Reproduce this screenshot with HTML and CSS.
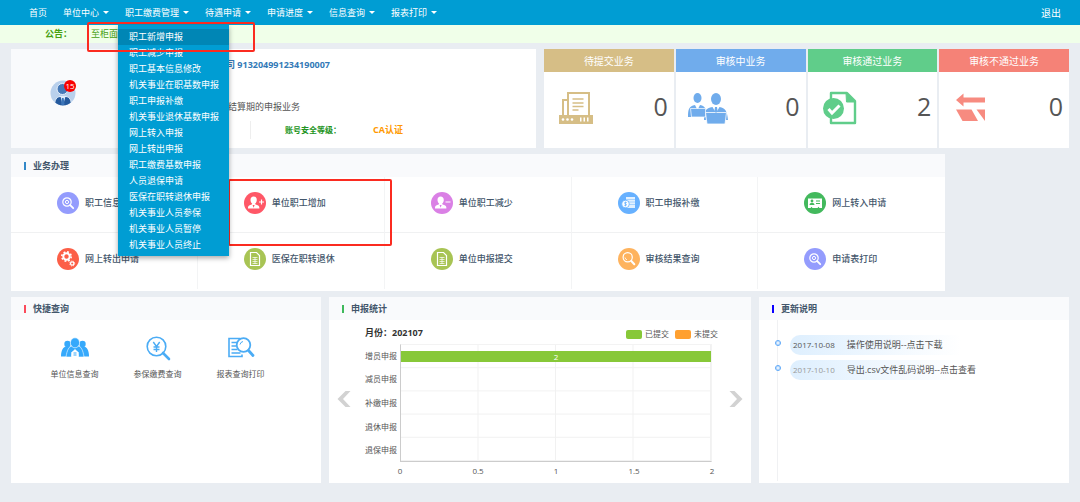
FILE: index.html
```html
<!DOCTYPE html>
<html lang="zh-CN">
<head>
<meta charset="utf-8">
<title>单位网上申报</title>
<link rel="stylesheet" href="styles.css">
</head>
<body>
<svg class="defs" aria-hidden="true">
  <symbol id="i-zoom" viewBox="0 0 22 22"><g fill="none" stroke="#fff"><circle cx="10" cy="10" r="4.2" stroke-width="1.2"/><circle cx="10" cy="10" r="1.6" stroke-width="1"/><path d="M13.2 13.2l3 3" stroke-width="1.8" stroke-linecap="round"/></g></symbol>
  <symbol id="i-user" viewBox="0 0 22 22"><path fill="#fff" d="M9.6 4.6c2 0 3.2 1.400 3.200 3.400 0 1.500-.7 2.900-1.600 3.500v.8l3 1.200c.8.400 1.200 1.200 1.200 2.900H4c0-1.700.3-2.500 1.100-2.900l3-1.200v-.8c-.9-.6-1.600-2-1.600-3.500 0-2 1.100-3.400 3.100-3.400z"/><path d="M8.600 13l1 2.800 1-2.800z" fill="currentColor"/></symbol>
  <symbol id="i-doc" viewBox="0 0 22 22"><g fill="none" stroke="#fff"><path d="M6.500 4.500h6l3 3v10h-9z" stroke-width="1.200"/><path d="M8.500 9.500h5M8.500 11.500h5M8.500 13.500h5M8.500 15.500h5M11 9v7" stroke-width=".7"/></g></symbol>
</svg>

<header class="topbar">
  <nav class="nav">
    <a class="nav-link" href="#">首页</a>
    <a class="nav-link drop" href="#">单位中心</a>
    <div class="nav-item">
      <a class="nav-link drop" href="#">职工缴费管理</a>
      <ul class="menu">
        <li><a class="active" href="#">职工新增申报</a></li>
        <li><a href="#">职工减少申报</a></li>
        <li><a href="#">职工基本信息修改</a></li>
        <li><a href="#">机关事业在职基数申报</a></li>
        <li><a href="#">职工申报补缴</a></li>
        <li><a href="#">机关事业退休基数申报</a></li>
        <li><a href="#">网上转入申报</a></li>
        <li><a href="#">网上转出申报</a></li>
        <li><a href="#">职工缴费基数申报</a></li>
        <li><a href="#">人员退保申请</a></li>
        <li><a href="#">医保在职转退休申报</a></li>
        <li><a href="#">机关事业人员参保</a></li>
        <li><a href="#">机关事业人员暂停</a></li>
        <li><a href="#">机关事业人员终止</a></li>
      </ul>
      <span class="mark mark-menu"></span>
    </div>
    <a class="nav-link drop" href="#">待遇申请</a>
    <a class="nav-link drop" href="#">申请进度</a>
    <a class="nav-link drop" href="#">信息查询</a>
    <a class="nav-link drop" href="#">报表打印</a>
  </nav>
  <a class="logout" href="#">退出</a>
</header>

<div class="notice"><strong>公告：</strong><span>至柜面</span></div>

<main class="page">
  <div class="overview">
    <section class="account">
      <div class="account-side">
        <div class="avatar">
          <svg viewBox="0 0 26 26"><defs><clipPath id="av"><circle cx="13" cy="13" r="12.500"/></clipPath></defs><circle cx="13" cy="13" r="12.500" fill="#b9d0ec"/><g clip-path="url(#av)"><circle cx="12.500" cy="9" r="5.500" fill="#4679b8" stroke="#e4eefa"/><path d="M4.500 26c0-6 2-9 5.500-9.500h6c3.500.5 5.500 3.500 5.500 9.500z" fill="#24599d" stroke="#e4eefa"/><path d="M10.500 16.500l2.300 9.500 2.700-9.500z" fill="#dceafa"/><path d="M12 18h1.600l1 6-1.800 2-1.800-2z" fill="#3b74b8"/></g></svg>
          <span class="badge">15</span>
        </div>
      </div>
      <div class="account-info">
        <h1>公司 913204991234190007</h1>
        <p class="account-tip">结算期的申报业务</p>
        <div class="level"><span class="level-name">账号安全等级：</span><strong>CA认证</strong></div>
      </div>
    </section>
    <div class="stats">
      <section class="stat sand"><h2>待提交业务</h2><div class="stat-body">
        <svg viewBox="0 0 36 34"><g fill="none" stroke="currentColor" stroke-width="2"><path d="M10 24V2h21v22"/><path d="M10 9H5v15"/><path d="M14.500 8h11M14.500 12h11M14.500 15.500h11M14.500 19h6" stroke-width="1.500"/></g><path d="M1 24h34v9H1z" fill="currentColor"/><g fill="#fff"><circle cx="5" cy="28.500" r="1.300"/><circle cx="9.500" cy="28.500" r="1.300"/><circle cx="14" cy="28.500" r="1.300"/><path d="M22 26.500h1.500v4H22zM25.500 26.500H27v4h-1.500zM29 26.500h1.500v4H29z"/></g></svg>
        <span>0</span></div></section>
      <section class="stat blue"><h2>审核中业务</h2><div class="stat-body">
        <svg class="wide" viewBox="0 0 40 34"><g fill="currentColor"><ellipse cx="9.500" cy="7" rx="4" ry="5"/><path d="M0 26c0-8 1-11 7-12l2.500 5 2.500-5c3 .5 5 2 6 5l-2 7z"/><ellipse cx="28" cy="8" rx="5" ry="6"/><path d="M16 29c0-9 1.500-12 8.500-13l3.500 6 3.500-6c6 1 7.500 4 8.500 13z"/></g><path d="M2.500 17.500h15v8.500h-14z" fill="currentColor" stroke="#fff" stroke-width=".7"/><path d="M17.500 21.500h21l-1.500 11.500H19z" fill="currentColor" stroke="#fff" stroke-width=".8"/><path d="M27 16h2l.6 4-1.600 2-1.600-2z" fill="currentColor"/></svg>
        <span>0</span></div></section>
      <section class="stat green"><h2>审核通过业务</h2><div class="stat-body">
        <svg viewBox="0 0 36 34"><path d="M9 8V2h16l8 8v22H9v-5" fill="none" stroke="currentColor" stroke-width="2.400" stroke-linejoin="round"/><path d="M24 2l9 9h-8.500z" fill="currentColor" stroke="currentColor"/><circle cx="11.500" cy="17.500" r="10.500" fill="currentColor"/><path d="M6.500 18l3.500 4 7.500-7.500" fill="none" stroke="#fff" stroke-width="3"/></svg>
        <span>2</span></div></section>
      <section class="stat red"><h2>审核不通过业务</h2><div class="stat-body">
        <svg viewBox="0 0 36 34"><g fill="currentColor"><path d="M3 9L10.500 2.500v4H32v5H10.500v4z"/><path d="M3 18.500h15.500L25 30H9.500z"/><path d="M23.500 18.500H32V30z"/></g></svg>
        <span>0</span></div></section>
    </div>
  </div>

  <section class="panel services">
    <h2 class="panel-title t-blue">业务办理</h2>
    <div class="service-grid">
      <a class="service" href="#"><svg class="c1"><use href="#i-zoom"/></svg>职工信息修改</a>
      <a class="service" href="#"><svg class="c2" viewBox="0 0 22 22"><use href="#i-user"/><path d="M15 10h5M17.500 7.500v5" stroke="#fff" stroke-width="1.200"/></svg>单位职工增加<span class="mark mark-service"></span></a>
      <a class="service" href="#"><svg class="c3" viewBox="0 0 22 22"><use href="#i-user"/><path d="M14.500 10h5" stroke="#fff" stroke-width="1.200"/></svg>单位职工减少</a>
      <a class="service" href="#"><svg class="c4" viewBox="0 0 22 22"><path d="M8 5h9v11H8z" fill="#e3f1ff"/><path d="M8 7.500h9M8 10h9M8 12.500h9" stroke="#8cc5ff" stroke-width=".7"/><circle cx="7.500" cy="12" r="3.800" fill="#fff" stroke="#67b1ff" stroke-width=".8"/><path d="M8.800 10.700c-2.500-1.200-3 .8-1.300 1.200s1.200 2.400-1.300 1.300M7.500 9.700v4.600" stroke="#67b1ff" stroke-width=".8" fill="none"/></svg>职工申报补缴</a>
      <a class="service" href="#"><svg class="c5" viewBox="0 0 22 22"><path d="M4 6.500h14v9.500h-2.500l-1-1.300-1 1.300h-5l-1-1.300-1 1.300H4z" fill="#fff"/><circle cx="8" cy="9" r="1.400" fill="#43b95d"/><path d="M5.500 13c0-3 5-3 5 0zM12 8.500h4v1h-4zM12 11h4v1h-4z" fill="#43b95d"/></svg>网上转入申请</a>
      <a class="service" href="#"><svg class="c6" viewBox="0 0 22 22"><g fill="none" stroke="#fff"><circle cx="9.500" cy="8.500" r="3.200" stroke-width="2"/><circle cx="9.500" cy="8.500" r="4.700" stroke-width="1.600" stroke-dasharray="1.850 1.850"/><circle cx="15.200" cy="15.500" r="1.700" stroke-width="1.300"/><circle cx="15.200" cy="15.500" r="2.500" stroke-width=".9" stroke-dasharray="1 1"/></g></svg>网上转出申请</a>
      <a class="service" href="#"><svg class="c7"><use href="#i-doc"/></svg>医保在职转退休</a>
      <a class="service" href="#"><svg class="c7"><use href="#i-doc"/></svg>单位申报提交</a>
      <a class="service" href="#"><svg class="c8" viewBox="0 0 22 22"><g fill="none" stroke="#fff"><circle cx="9.700" cy="9.300" r="4.600" stroke-width="1.200"/><path d="M7 9.500a2.800 2.800 0 0 0 2 2.300" stroke-width=".8"/><path d="M13.300 13l3 3.200" stroke-width="2" stroke-linecap="round"/></g></svg>审核结果查询</a>
      <a class="service" href="#"><svg class="c1"><use href="#i-zoom"/></svg>申请表打印</a>
    </div>
  </section>

  <div class="bottom">
    <section class="panel">
      <h2 class="panel-title t-red">快捷查询</h2>
      <div class="quick">
        <a href="#"><svg viewBox="0 0 28 26" fill="#36a9fb"><circle cx="6.500" cy="8.500" r="3.200"/><path d="M0 21c0-6 2-9.500 5-10h5L6 21z"/><circle cx="21.500" cy="8.500" r="3.200"/><path d="M28 21c0-6-2-9.500-5-10h-5l4 10z"/><path d="M5 21.500c1-7 3-10.500 6-11h6c3 .5 5 4 6 11h-5.500l-.5-5h-6l-.5 5z" stroke="#fff" stroke-width=".6"/><ellipse cx="14" cy="7.300" rx="4.600" ry="5" stroke="#fff" stroke-width=".6"/><path d="M10.500 17l3.500-3.500 3.500 3.500v4h-7z" fill="#fff"/><path d="M12.500 17h3v.9h-3zM12.500 19h3v.9h-3z"/></svg>单位信息查询</a>
        <a href="#"><svg viewBox="0 0 28 26" fill="none" stroke="#4bacf5"><circle cx="12.500" cy="11" r="9.300" stroke-width="1.600"/><path d="M9.300 6.500l3.200 4.500 3.200-4.500M12.500 11v5.500M9.500 11.500h6M9.500 14h6" stroke-width="1.400"/><path d="M19 17.500l6 6" stroke-width="2.600" stroke-linecap="round"/></svg>参保缴费查询</a>
        <a href="#"><svg viewBox="0 0 28 26" fill="none" stroke="#4bacf5"><path d="M13 3H2v18h13v-2" stroke-width="1.600"/><path d="M4.500 7H10M4.500 10.500H9M4.500 14h6M4.500 17.500h9" stroke-width="1.400"/><circle cx="16.500" cy="9.500" r="6.800" stroke-width="1.800"/><path d="M13 9a3.800 3.800 0 0 1 3-3" stroke-width="1"/><path d="M21.500 15l4.500 5" stroke-width="2.800" stroke-linecap="round"/></svg>报表查询打印</a>
      </div>
    </section>

    <section class="panel">
      <h2 class="panel-title t-green">申报统计</h2>
      <div class="stats-body">
        <button class="arrow" aria-label="上一月"><svg viewBox="0 0 14 18"><path d="M9 1h5L6.500 9l7.500 8H9L1 9z" fill="#d2d2d2"/></svg></button>
        <div class="chart">
          <div class="chart-head"><strong>月份：202107</strong><span class="legend"><i class="done"></i>已提交<i class="todo"></i>未提交</span></div>
          <div class="chart-main">
            <div class="y-labels"><span>增员申报</span><span>减员申报</span><span>补缴申报</span><span>退休申报</span><span>退保申报</span></div>
            <div class="plot"><div class="bar" style="width:100%">2</div></div>
          </div>
          <div class="x-labels"><span>0</span><span>0.5</span><span>1</span><span>1.5</span><span>2</span></div>
        </div>
        <button class="arrow" aria-label="下一月"><svg viewBox="0 0 14 18"><path d="M5 1H0l7.500 8L0 17h5l8-8z" fill="#d2d2d2"/></svg></button>
      </div>
    </section>

    <section class="panel">
      <h2 class="panel-title t-navy">更新说明</h2>
      <ul class="timeline">
        <li><a href="#"><time>2017-10-08</time>操作使用说明--点击下载</a></li>
        <li><a class="old" href="#"><time>2017-10-10</time>导出.csv文件乱码说明--点击查看</a></li>
      </ul>
    </section>
  </div>
</main>
</body>
</html>
```
FILE: styles.css
```css
*, *::before, *::after { box-sizing: border-box; }
body {
  margin: 0;
  background: #e9edf2;
  color: #555;
  font: 9px/16px "Open Sans", "Noto Sans CJK SC", sans-serif;
}
h1, h2, p, ul { margin: 0; padding: 0; font-size: inherit; }
ul { list-style: none; }
a { color: inherit; text-decoration: none; }
svg { display: block; flex: none; }
.defs { position: absolute; width: 0; height: 0; }

.topbar {
  display: flex;
  justify-content: space-between;
  align-items: center;
  height: 25px;
  padding: 0 19px 0 29px;
  background: #009dd3;
  color: #fff;
}
.nav { display: flex; gap: 16px; }
.nav-item { position: relative; z-index: 5; }
.nav-link { display: flex; align-items: center; gap: 4px; }
.drop::after {
  content: "";
  border: 3px solid transparent;
  border-top-color: #fff;
  border-bottom: 0;
}
.logout { font-size: 10px; }
.menu {
  position: absolute;
  top: 20px;
  left: -7px;
  width: 111px;
  padding: 4px 0 3px;
  background: #009dd3;
  box-shadow: 0 2px 5px rgba(0, 0, 0, .35);
}
.menu a { display: block; padding-left: 11px; white-space: nowrap; }
.menu .active { background: #0086b5; }
.mark {
  position: absolute;
  border: 2px solid #fb2b20;
  border-radius: 2px;
  pointer-events: none;
}
.mark-menu { top: 17px; left: -38px; width: 168px; height: 30px; }
.mark-service { top: 2px; left: 30px; right: -8px; bottom: -14px; z-index: 2; }

.notice {
  display: flex;
  align-items: center;
  gap: 19px;
  height: 18px;
  padding-left: 45px;
  background: #f0ffe9;
  color: #46a010;
}

.page { display: grid; gap: 6px; padding: 6px 11px 20px; }
.overview { display: grid; grid-template-columns: 1fr 1fr; gap: 8px; min-height: 99px; }
.account { display: flex; background: #fff; }
.account-side { flex: 0 0 28%; padding: 31px 0 0 39px; background: #f9fafc; }
.avatar { position: relative; width: 26px; height: 26px; }
.badge {
  position: absolute;
  top: 0;
  left: 14px;
  width: 12px;
  height: 12px;
  border-radius: 50%;
  background: #f90000;
  color: #fff;
  font-size: 8px;
  line-height: 12px;
  text-align: center;
}
.account-info { flex: 1; padding: 8px 0 0 59px; }
.account h1 { color: #337ab7; }
.account-tip { padding: 26px 0 0 11px; }
.level { display: flex; align-items: center; margin: 6px 0 0 33px; height: 18px; border-left: 1px solid #eee; color: #f90; }
.level-name { padding: 0 32px 0 34px; color: #219321; font-size: 8px; font-weight: bold; }

.stats { display: grid; grid-template-columns: repeat(4, 1fr); gap: 2px; }
.stat { background: #fff; }
.stat h2 { color: #fff; font-size: 10px; font-weight: normal; line-height: 24px; height: 23px; text-align: center; }
.stat-body { display: flex; justify-content: space-between; padding: 19px 6px 0 14px; }
.stat-body svg { width: 36px; height: 34px; }
.stat.blue .stat-body { padding-left: 12px; }
.stat-body .wide { width: 40px; }
.stat-body span { color: #555; font-size: 25px; line-height: 31px; }
.sand { color: #d6be86; } .sand h2 { background: #d6be86; }
.blue { color: #70acec; } .blue h2 { background: #70acec; }
.green { color: #60cd8a; } .green h2 { background: #60cd8a; }
.red { color: #f78b80; } .red h2 { background: #f58277; }

.panel { background: #fff; }
.panel-title {
  display: flex;
  align-items: center;
  gap: 7px;
  height: 23px;
  padding-left: 13px;
  background: #f9fafc;
  color: #43566b;
}
.panel-title::before { content: ""; width: 2px; height: 8px; background: currentColor; }
.t-blue::before { background: #3388c8; }
.t-red::before { background: #fb4b5b; }
.t-green::before { background: #3fb95c; }
.t-navy::before { background: #0c00ff; }

.services { width: 88.3%; padding-bottom: 2px; }
.service-grid { display: grid; grid-template-columns: repeat(5, 1fr); }
.service {
  position: relative;
  display: flex;
  align-items: center;
  gap: 6px;
  height: 56px;
  padding: 0 0 4px 46px;
  border-right: 1px solid #f3f4f5;
  color: #43566b;
  font-weight: 500;
}
.service:nth-child(5n) { border-right: 0; }
.service:nth-child(-n+5) { border-bottom: 1px solid #f0f1f2; }
.service svg { width: 22px; height: 22px; border-radius: 50%; }
.c1 { background: #949cfd; }
.c2 { background: #ff5767; color: #ff5767; }
.c3 { background: #da80e5; color: #da80e5; }
.c4 { background: #67b1ff; }
.c5 { background: #43b95d; }
.c6 { background: #fc5f47; }
.c7 { background: #a8c454; }
.c8 { background: #feb35e; }

.bottom { display: grid; grid-template-columns: 310fr 422fr 310fr; gap: 8px; }
.quick { display: flex; padding: 15px 22px; font-size: 8px; }
.quick a { display: flex; flex-direction: column; align-items: center; gap: 4px; flex: 0 0 83px; }
.quick svg { width: 28px; height: 27px; }

.stats-body { display: flex; align-items: center; gap: 14px; padding: 4px 7px 3px; }
.arrow { flex: none; padding: 0 0 6px; border: 0; background: none; }
.arrow svg { width: 15px; height: 18px; }
.chart { flex: 1; padding-right: 3px; font-size: 8px; }
.chart-head { display: flex; justify-content: space-between; margin-right: -6px; height: 20px; line-height: 18px; }
.chart-head strong { color: #333; font-size: 9px; }
.legend { display: flex; align-items: center; gap: 3px; white-space: nowrap; }
.legend i { width: 16px; height: 9px; border-radius: 2px; }
.done { background: #87c838; }
.legend .todo { margin-left: 3px; background: #ffa030; }
.chart-main { display: flex; height: 118px; }
.y-labels { display: grid; grid-template-rows: repeat(5, 1fr); align-items: center; padding-right: 3px; white-space: nowrap; }
.plot {
  flex: 1;
  padding-top: 6px;
  border: 1px solid #f3f3f3;
  border-left-color: #ccc;
  border-bottom-color: #ccc;
  background-image: linear-gradient(to left, #f1f1f1 1px, transparent 1px), linear-gradient(to top, #f1f1f1 1px, transparent 1px);
  background-size: 25% 20%;
}
.bar { height: 11px; background: #87c838; color: #fff; line-height: 12px; text-align: center; }
.x-labels { display: flex; justify-content: space-between; padding-left: 35px; line-height: 18px; }
.x-labels span { display: flex; justify-content: center; width: 0; }

.timeline { display: grid; align-content: start; gap: 5px; height: calc(100% - 25px); margin-left: 18px; padding: 15px 0 0 12px; border-left: 1px solid #f0f1f3; }
.timeline li { position: relative; }
.timeline li::before {
  content: "";
  position: absolute;
  top: 5px;
  left: -15px;
  width: 6px;
  height: 6px;
  border: 1px solid #58a5f8;
  outline: 1px solid #a9d2fb;
  outline-offset: -2px;
  border-radius: 50%;
  background: #fff;
}
.timeline a {
  display: flex;
  gap: 12px;
  width: 190px;
  padding: 2px 0 2px 3px;
  border-radius: 10px;
  background: linear-gradient(to right, #deeffe, #fff 90%);
  white-space: nowrap;
}
.timeline time { font-size: 8px; }
.timeline .old time { color: #999; }
```
